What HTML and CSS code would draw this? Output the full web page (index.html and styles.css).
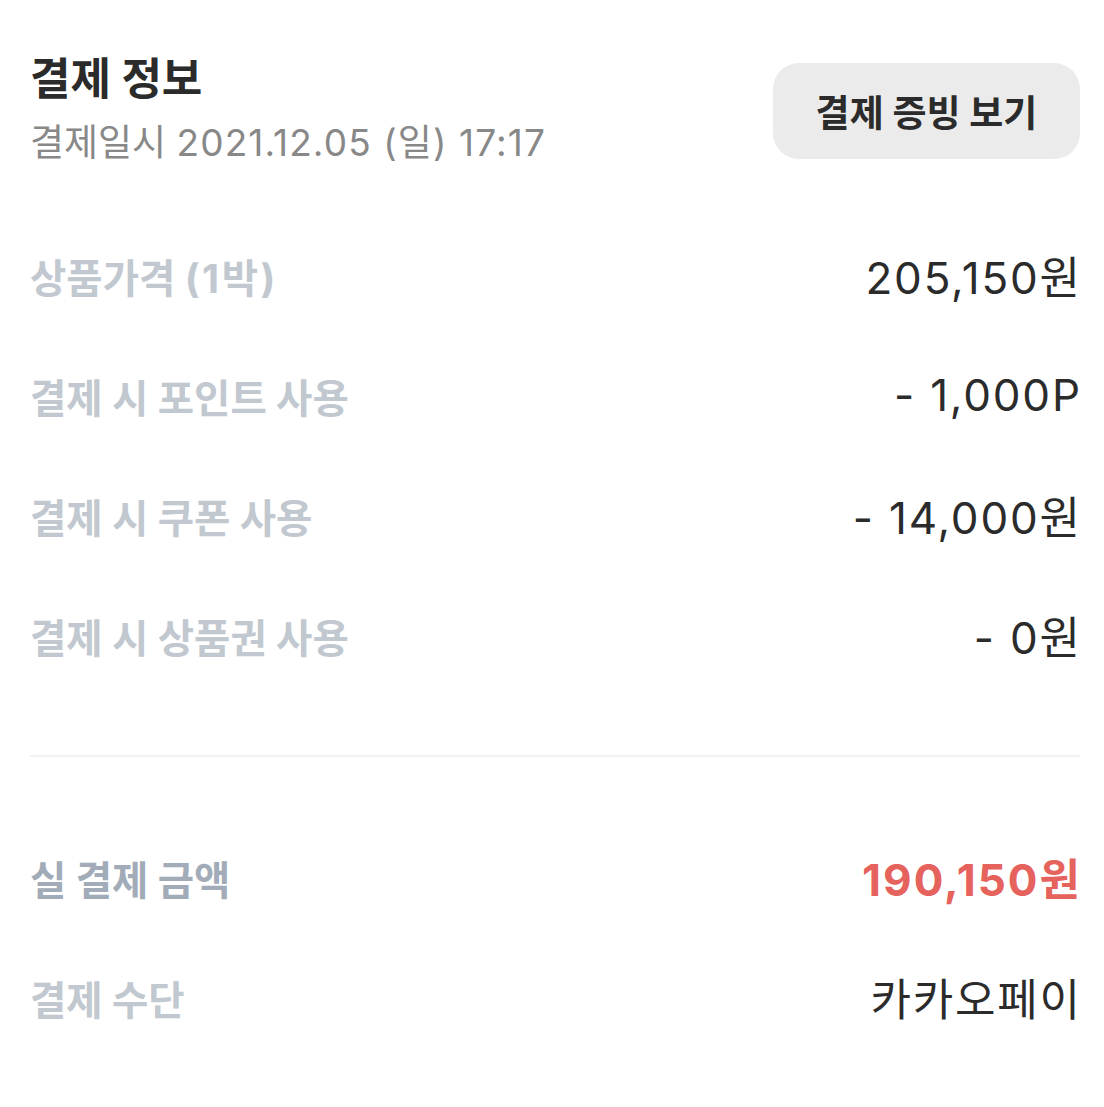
FILE: index.html
```html
<!DOCTYPE html>
<html lang="ko">

<head>
    <meta charset="UTF-8">
    <meta name="viewport" content="width=device-width, initial-scale=1.0">
    <title>결제 정보</title>
    <link rel="stylesheet" href="styles.css">
</head>

<body>
    <div class="payment">
        <div class="payment-header">
            <div class="header-text">
                <h1 class="payment-title">결제 정보</h1>
                <p class="payment-date">결제일시 <span class="date-num">2021.12.05 (일) 17:17</span></p>
            </div>
            <button class="receipt-button">결제 증빙 보기</button>
        </div>

        <ul class="price-list">
            <li class="price-row">
                <span class="row-label">상품가격 <span class="label-num">(1박)</span></span>
                <span class="row-value">205,150원</span>
            </li>
            <li class="price-row">
                <span class="row-label">결제 시 포인트 사용</span>
                <span class="row-value">- 1,000P</span>
            </li>
            <li class="price-row">
                <span class="row-label">결제 시 쿠폰 사용</span>
                <span class="row-value">- 14,000원</span>
            </li>
            <li class="price-row">
                <span class="row-label">결제 시 상품권 사용</span>
                <span class="row-value">- 0원</span>
            </li>
        </ul>

        <hr class="divider">

        <ul class="price-list total-list">
            <li class="price-row">
                <span class="row-label total-label">실 결제 금액</span>
                <span class="row-value total-value">190,150원</span>
            </li>
            <li class="price-row">
                <span class="row-label">결제 수단</span>
                <span class="row-value">카카오페이</span>
            </li>
        </ul>
    </div>
</body>

</html>
```

FILE: styles.css
```css
body,
ul,
h1,
p {
    margin: 0;
    padding: 0;
}

body {
    font-family: Inter, "Noto Sans CJK KR", sans-serif;
    background-color: #fff;
    color: #333;
}

ul {
    list-style: none;
}

.payment {
    padding: 51px 24px 40px 30px;
}

.payment-header {
    display: flex;
    justify-content: space-between;
    align-items: center;
}

.payment-title {
    font-size: 44px;
    line-height: 56px;
    font-weight: bold;
    color: #2b2b2b;
}

.payment-date {
    margin-top: 12px;
    font-size: 37px;
    line-height: 48px;
    color: #888;
}

.date-num {
    letter-spacing: 1.1px;
}

.receipt-button {
    width: 307px;
    height: 96px;
    margin-top: 4px;
    border: none;
    border-radius: 26px;
    background-color: #ebebeb;
    color: #2b2b2b;
    font-family: inherit;
    font-size: 37px;
    font-weight: bold;
    cursor: pointer;
}

.price-list {
    margin-top: 48px;
}

.price-row {
    display: flex;
    justify-content: space-between;
    align-items: center;
    height: 120px;
}

.row-label {
    font-size: 39.5px;
    font-weight: bold;
    color: #c2c8cf;
}

.label-num {
    letter-spacing: 2.5px;
}

.row-value {
    font-size: 44px;
    letter-spacing: 1.8px;
    margin-right: -1.8px;
    color: #2b2b2b;
}

.divider {
    border: none;
    height: 2px;
    background-color: #f2f2f2;
    margin: 60px 0 0;
}

.total-list {
    margin-top: 60px;
}

.total-label {
    color: #a1acb8;
}

.total-value {
    font-weight: bold;
    letter-spacing: 2px;
    margin-right: -2px;
    color: #e5625d;
}
```
